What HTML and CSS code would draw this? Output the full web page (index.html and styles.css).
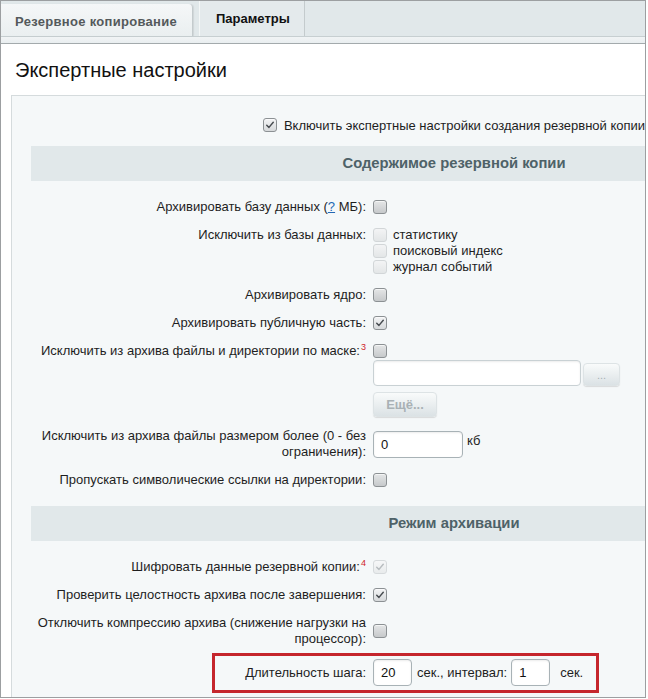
FILE: index.html
```html
<!DOCTYPE html>
<html lang="ru">
<head>
<meta charset="utf-8">
<title>Экспертные настройки</title>
<link rel="stylesheet" href="styles.css">
</head>
<body>
<div class="frame">
  <div class="tabs">
    <div class="tab tab-inactive">Резервное копирование</div>
    <div class="tab tab-active">Параметры</div>
  </div>
  <div class="tabs-under"></div>
  <h1 class="title">Экспертные настройки</h1>
  <div class="panel">
    <div class="table">
      <div class="toggle-row">
        <span class="cb checked"><svg viewBox="0 0 14 14"><polyline points="3.2,7.2 5.8,9.8 10.8,3.8"/></svg></span>
        <span>Включить экспертные настройки создания резервной копии</span>
      </div>

      <div class="band band-first">Содержимое резервной копии</div>

      <div class="row">
        <div class="label">Архивировать базу данных (<a class="link" href="#">?</a> МБ):</div>
        <div class="field"><span class="cb"></span></div>
      </div>

      <div class="row">
        <div class="label">Исключить из базы данных:</div>
        <div class="field list">
          <div class="opt"><span class="cb dim"></span><span>статистику</span></div>
          <div class="opt"><span class="cb dim"></span><span>поисковый индекс</span></div>
          <div class="opt"><span class="cb dim"></span><span>журнал событий</span></div>
        </div>
      </div>

      <div class="row">
        <div class="label">Архивировать ядро:</div>
        <div class="field"><span class="cb"></span></div>
      </div>

      <div class="row">
        <div class="label">Архивировать публичную часть:</div>
        <div class="field"><span class="cb checked light"><svg viewBox="0 0 14 14"><polyline points="3.2,7.2 5.8,9.8 10.8,3.8"/></svg></span></div>
      </div>

      <div class="row row-mask">
        <div class="label">Исключить из архива файлы и директории по маске:<sup class="note">3</sup></div>
        <div class="field list">
          <div class="opt"><span class="cb"></span></div>
          <div class="mask-line">
            <span class="inp inp-mask"></span>
            <span class="btn btn-dots">...</span>
          </div>
          <div class="more-line"><span class="btn btn-more">Ещё...</span></div>
        </div>
      </div>

      <div class="row row-center">
        <div class="label">Исключить из архива файлы размером более (0 - без ограничения):</div>
        <div class="field inline">
          <span class="inp inp-size">0</span>
          <span class="unit">кб</span>
        </div>
      </div>

      <div class="row">
        <div class="label">Пропускать символические ссылки на директории:</div>
        <div class="field"><span class="cb"></span></div>
      </div>

      <div class="band">Режим архивации</div>

      <div class="row">
        <div class="label">Шифровать данные резервной копии:<sup class="note">4</sup></div>
        <div class="field"><span class="cb checked disabled"><svg viewBox="0 0 14 14"><polyline points="3.2,7.2 5.8,9.8 10.8,3.8"/></svg></span></div>
      </div>

      <div class="row">
        <div class="label">Проверить целостность архива после завершения:</div>
        <div class="field"><span class="cb checked"><svg viewBox="0 0 14 14"><polyline points="3.2,7.2 5.8,9.8 10.8,3.8"/></svg></span></div>
      </div>

      <div class="row row-center">
        <div class="label">Отключить компрессию архива (снижение нагрузки на процессор):</div>
        <div class="field"><span class="cb"></span></div>
      </div>

      <div class="row row-center row-step">
        <div class="label">Длительность шага:</div>
        <div class="field inline">
          <span class="inp inp-num">20</span>
          <span class="sep">сек., интервал:</span>
          <span class="inp inp-num">1</span>
          <span class="sep sep-last">сек.</span>
        </div>
      </div>
    </div>
  </div>
</div>
</body>
</html>
```
FILE: styles.css
```css
html, body {
  margin: 0;
  padding: 0;
  background: #ffffff;
}

body {
  font-family: "Liberation Sans", Arial, sans-serif;
  font-size: 13px;
  color: #1e1e1e;
}

.frame {
  width: 646px;
  height: 698px;
  box-sizing: border-box;
  border: 1px solid #9c9fa1;
  overflow: hidden;
  background: #ffffff;
}

/* ---------- tabs ---------- */
.tabs {
  display: flex;
  align-items: flex-end;
  height: 35px;
  background: #e1e8ea;
  border-bottom: 1px solid #c7cfd1;
}

.tab {
  box-sizing: border-box;
  height: 100%;
  font-weight: bold;
  font-size: 13px;
  display: flex;
  align-items: center;
}

.tab-inactive {
  width: 192px;
  height: 32px;
  padding-left: 14px;
  padding-top: 2px;
  color: #54595b;
  letter-spacing: 0.3px;
  background: linear-gradient(#f5f7f8, #eaeff0);
  border-right: 1px solid #c4cbcd;
  border-top-right-radius: 4px;
  box-shadow: 1px 0 1px rgba(0, 0, 0, 0.08);
}

.tab-active {
  margin-left: 6px;
  width: 106px;
  padding-left: 16px;
  padding-bottom: 1px;
  color: #111111;
  background: #e4eaec;
  border-left: 1px solid #f4f7f7;
  border-right: 1px solid #c4cbcd;
}

.tabs-under {
  height: 6px;
  background: linear-gradient(#f1f4f5, #e9eef0);
  border-bottom: 1px solid #a3aaac;
}

/* ---------- title ---------- */
.title {
  margin: 0 0 13px 0;
  padding: 14px 0 0 14px;
  font-weight: normal;
  font-size: 20px;
  line-height: 24px;
  color: #111111;
}

/* ---------- panel ---------- */
.panel {
  margin-left: 10px;
  width: 900px;
  min-height: 700px;
  background: #f5f8f9;
  border: 1px solid #d5dbdd;
  padding-top: 15px;
}

.table {
  margin-left: 19px;
  width: 846px;
}

.toggle-row {
  height: 28px;
  display: flex;
  align-items: center;
  justify-content: center;
  gap: 7px;
}

.band {
  margin: 12px 0 12px 0;
  height: 35px;
  line-height: 35px;
  text-align: center;
  background: #e1e8ea;
  font-weight: bold;
  font-size: 14.8px;
  color: #4e6268;
}

.band-first {
  margin-top: 7px;
}

.row {
  display: flex;
  align-items: flex-start;
  padding: 6px 0;
  line-height: 16px;
  position: relative;
}

.row-center {
  align-items: center;
}

.label {
  width: 335px;
  flex: none;
  text-align: right;
}

.field {
  margin-left: 7px;
  display: flex;
  align-items: center;
  min-height: 16px;
}

.field.list {
  flex-direction: column;
  align-items: flex-start;
}

.opt {
  display: flex;
  align-items: center;
  gap: 6px;
  height: 16px;
}

.link {
  color: #2468b4;
  text-decoration: underline;
}

.note {
  color: #d0252a;
  font-size: 9px;
  line-height: 0;
  margin-left: 1px;
}

/* ---------- checkbox ---------- */
.cb {
  display: inline-block;
  flex: none;
  width: 14px;
  height: 14px;
  box-sizing: border-box;
  border: 1px solid #8c9194;
  border-radius: 3px;
  background: linear-gradient(#e4e6e7, #c6c9cb);
  box-shadow: inset 0 1px 0 rgba(255, 255, 255, 0.6);
  position: relative;
}

.cb svg {
  display: block;
  width: 12px;
  height: 12px;
}

.cb svg polyline {
  fill: none;
  stroke: #474c50;
  stroke-width: 1.7;
  stroke-linecap: round;
  stroke-linejoin: round;
}

.cb.checked {
  background: linear-gradient(#f3f4f5, #d6d9db);
}

.cb.dim {
  border-color: #d2d6d8;
  background: linear-gradient(#f3f4f5, #e3e6e7);
  box-shadow: none;
}

.cb.disabled {
  border-color: #d6dadc;
  background: linear-gradient(#f6f7f8, #e8ebec);
  box-shadow: none;
}

.cb.disabled svg polyline {
  stroke: #b7bcbf;
}

/* ---------- inputs & buttons ---------- */
.inp {
  display: inline-block;
  box-sizing: border-box;
  height: 27px;
  line-height: 25px;
  padding: 0 7px;
  background: #ffffff;
  border: 1px solid #a8b2b6;
  border-radius: 4px;
  box-shadow: inset 0 1px 2px rgba(0, 0, 0, 0.08);
  color: #111111;
  font-size: 13px;
}

.row-mask {
  padding-bottom: 5px;
}

.mask-line {
  display: flex;
  align-items: flex-end;
  margin-top: 1px;
}

.inp-mask {
  width: 208px;
  height: 26px;
  border-color: #c9d1d4;
}

.btn {
  display: inline-flex;
  align-items: center;
  justify-content: center;
  box-sizing: border-box;
  border: 1px solid #dde3e5;
  border-radius: 4px;
  background: linear-gradient(#f9fbfb, #dbe2e5);
  box-shadow: 0 1px 1px rgba(0, 0, 0, 0.12);
  color: #a9b1b5;
  font-weight: bold;
}

.btn-dots {
  margin-left: 2px;
  width: 37px;
  height: 23px;
  font-size: 11px;
  font-weight: normal;
}

.more-line {
  margin-top: 6px;
}

.btn-more {
  width: 64px;
  height: 25px;
  font-size: 13px;
}

.field.inline {
  flex-direction: row;
  align-items: center;
}

.inp-size {
  width: 90px;
}

.unit {
  margin-left: 4px;
  align-self: flex-start;
  margin-top: 2px;
}

.inp-num {
  width: 39px;
  height: 27px;
}

.sep {
  margin: 0 4px 0 5px;
}

.sep-last {
  margin-left: 10px;
}

.row-step::after {
  content: "";
  position: absolute;
  left: 181px;
  top: 0;
  width: 387px;
  height: 40px;
  box-sizing: border-box;
  border: 3px solid #c5262d;
}
```
